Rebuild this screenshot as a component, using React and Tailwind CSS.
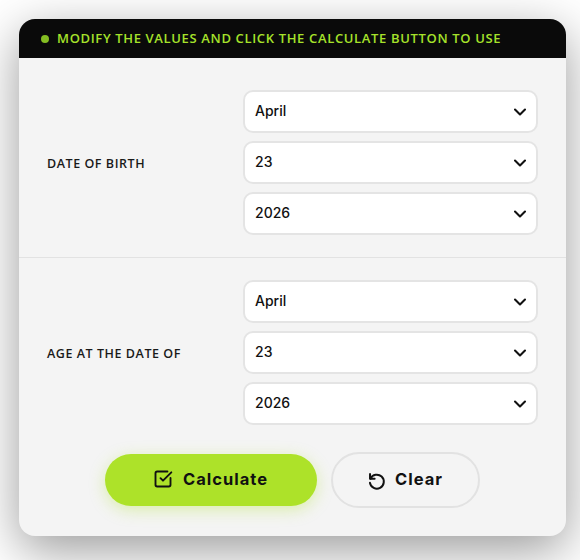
import React from 'react';
import { ChevronDown, SquareCheckBig } from 'lucide-react';

const SelectBox = ({ value }) => (
    <div className="flex h-[43px] items-center justify-between rounded-[10px] border-2 border-[#e4e4e4] bg-white pl-[10px] pr-[6px] font-['Inter',sans-serif] text-[14px] font-medium text-[#111]">
        <span className="pb-[2px]">{value}</span>
        <ChevronDown className="h-[20px] w-[20px] text-[#111]" strokeWidth={2.5} />
    </div>
);

const DateRow = ({ label, className }) => (
    <div className={`flex items-center justify-between px-[28px] ${className}`}>
        <span className="pt-[3px] font-['Open_Sans',sans-serif] text-[12.5px] font-semibold tracking-[0.55px] text-[#1a1a1a]">
            {label}
        </span>
        <div className="flex w-[295px] flex-col gap-[8px]">
            <SelectBox value="April" />
            <SelectBox value="23" />
            <SelectBox value="2026" />
        </div>
    </div>
);

const App = () => {
    return (
        <div className="h-[560px] w-[580px] overflow-hidden bg-white pl-[19px] pt-[19px]">
            <div className="h-[517px] w-[547px] overflow-hidden rounded-[16px] bg-[#f4f4f4] shadow-[0_14px_50px_rgba(0,0,0,0.4)]">
                {/* Notice */}
                <div className="flex h-[39px] items-center gap-[8px] bg-[#0a0a0a] pl-[22px] font-['Open_Sans',sans-serif] text-[13px] font-semibold tracking-[0.65px] text-[#a6e22a]">
                    <span className="h-[8px] w-[8px] rounded-full bg-[#84bd22]"></span>
                    <span>MODIFY THE VALUES AND CLICK THE CALCULATE BUTTON TO USE</span>
                </div>

                <DateRow label="DATE OF BIRTH" className="border-b border-[#e2e2e2] pb-[22px] pt-[32px]" />
                <DateRow label="AGE AT THE DATE OF" className="pt-[22px]" />

                {/* Actions */}
                <div className="mt-[27px] flex items-center justify-center gap-[14px] pr-[1px] font-['Inter',sans-serif] text-[16.5px] font-bold tracking-[1px] text-[#111]">
                    <button className="flex h-[52px] w-[212px] items-center justify-center gap-[10px] rounded-full bg-[#ade229] pb-[2px] shadow-[0_4px_16px_rgba(173,226,41,0.35)]">
                        <SquareCheckBig className="h-[20px] w-[20px]" strokeWidth={2.25} />
                        Calculate
                    </button>
                    <button className="flex h-[56px] w-[149px] items-center justify-center gap-[8px] rounded-full border-2 border-[#e2e2e2] bg-[#f4f4f4] pb-[2px] pr-[2px]">
                        <svg viewBox="0 0 24 24" className="mt-[3px] h-[22px] w-[22px]" fill="none" stroke="currentColor" strokeWidth="2.2" strokeLinecap="round" strokeLinejoin="round">
                            <path d="M5.5 4.5v5h5" />
                            <path d="M6 9.5A7.6 7.6 0 1 1 5.4 14" />
                        </svg>
                        Clear
                    </button>
                </div>
            </div>
        </div>
    );
};

export default App;
